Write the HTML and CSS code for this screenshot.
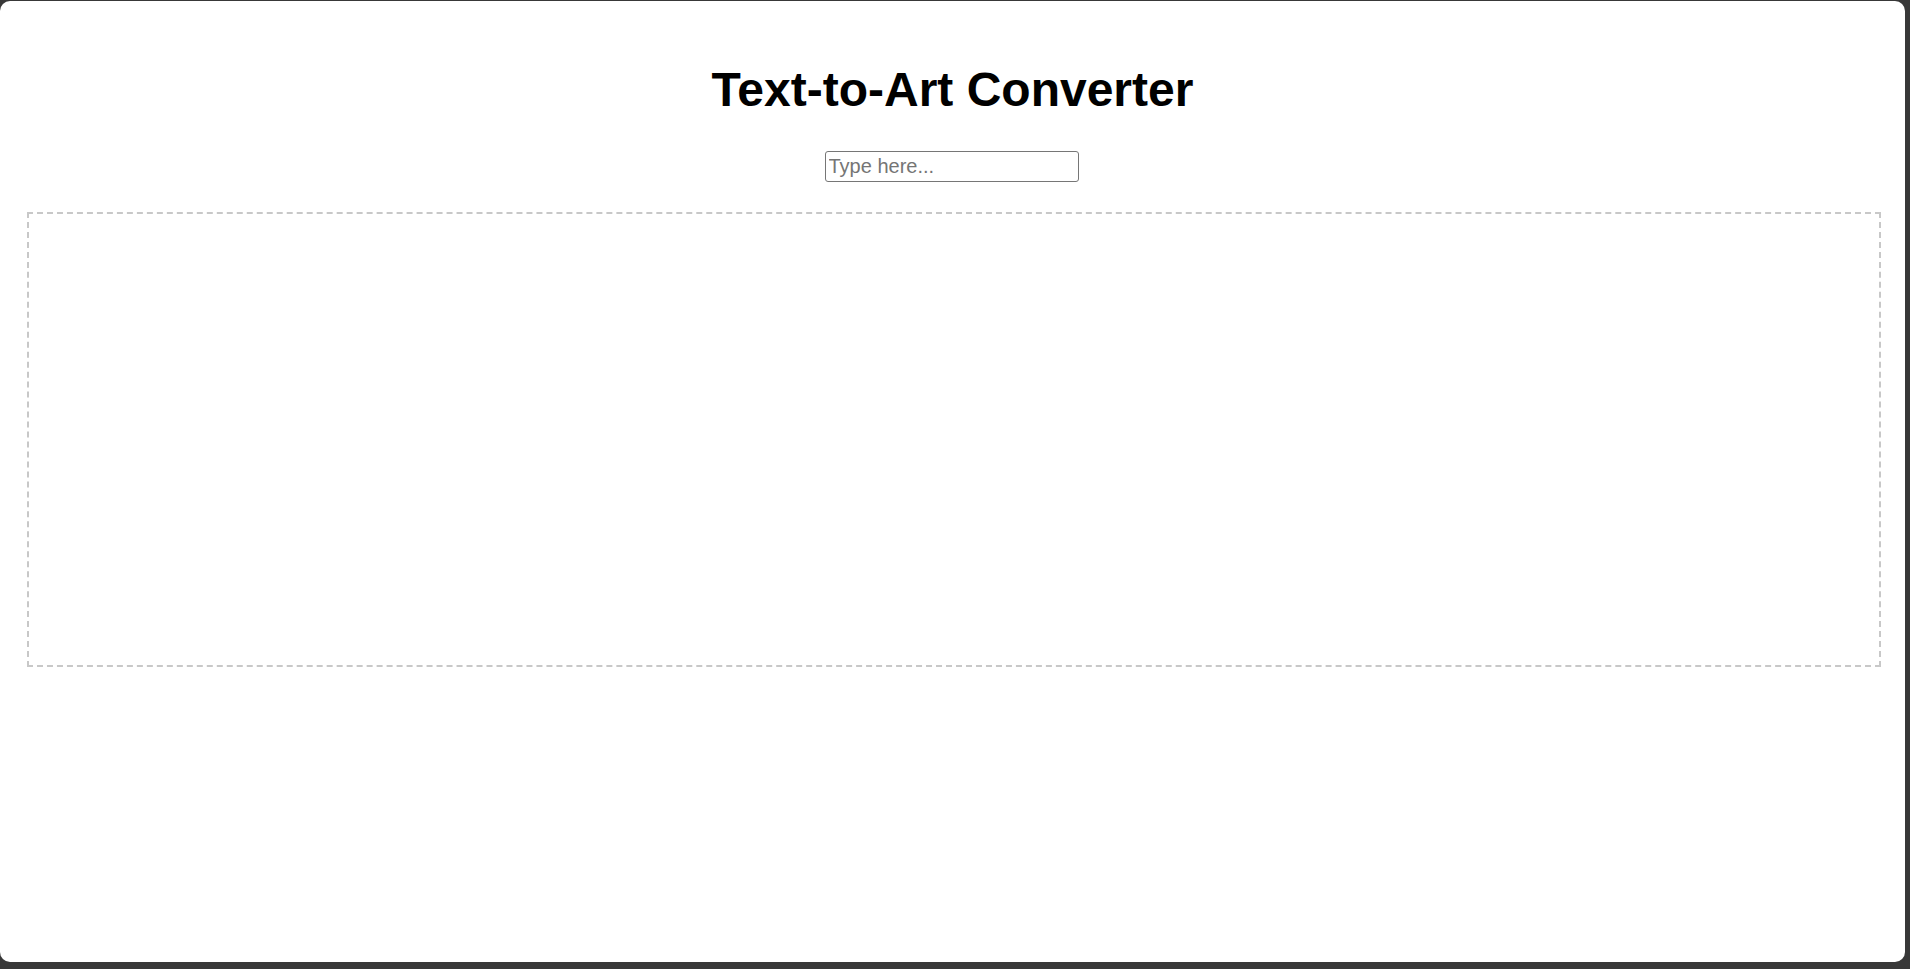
FILE: index.html
```html
<!DOCTYPE html>
<html lang="en">
<head>
<meta charset="utf-8">
<title>Text-to-Art Converter</title>
<link rel="stylesheet" href="styles.css">
</head>
<body>
<div class="window">
  <main class="app">
    <h1 class="title">Text-to-Art Converter</h1>
    <input class="text-input" type="text" placeholder="Type here...">
    <div class="art-area"></div>
  </main>
</div>
</body>
</html>
```

FILE: styles.css
```css
html, body {
  height: 100%;
}
body {
  margin: 0;
  box-sizing: border-box;
  padding: 1px 5px 7px 0;
  background: #383838;
  font-family: "Liberation Sans", Arial, sans-serif;
}
.window {
  height: 100%;
  background: #ffffff;
  border-radius: 10px;
  overflow: hidden;
}
.app {
  display: flex;
  flex-direction: column;
  align-items: center;
}
.title {
  margin: 0;
  padding-top: 61px;
  font-size: 48px;
  font-weight: 700;
  line-height: 55px;
  color: #000;
}
.text-input {
  margin: 34px 2px 0 0;
  box-sizing: border-box;
  width: 254px;
  height: 31px;
  padding: 1px 3px;
  border: 1.5px solid #767676;
  border-radius: 3px;
  font-family: "Liberation Sans", Arial, sans-serif;
  font-size: 20px;
  color: #000;
}
.text-input::placeholder {
  color: #757575;
}
.art-area {
  align-self: stretch;
  box-sizing: border-box;
  margin: 30px 24px 0 27px;
  height: 455px;
  border: 2px dashed #c8c8c8;
}
```
